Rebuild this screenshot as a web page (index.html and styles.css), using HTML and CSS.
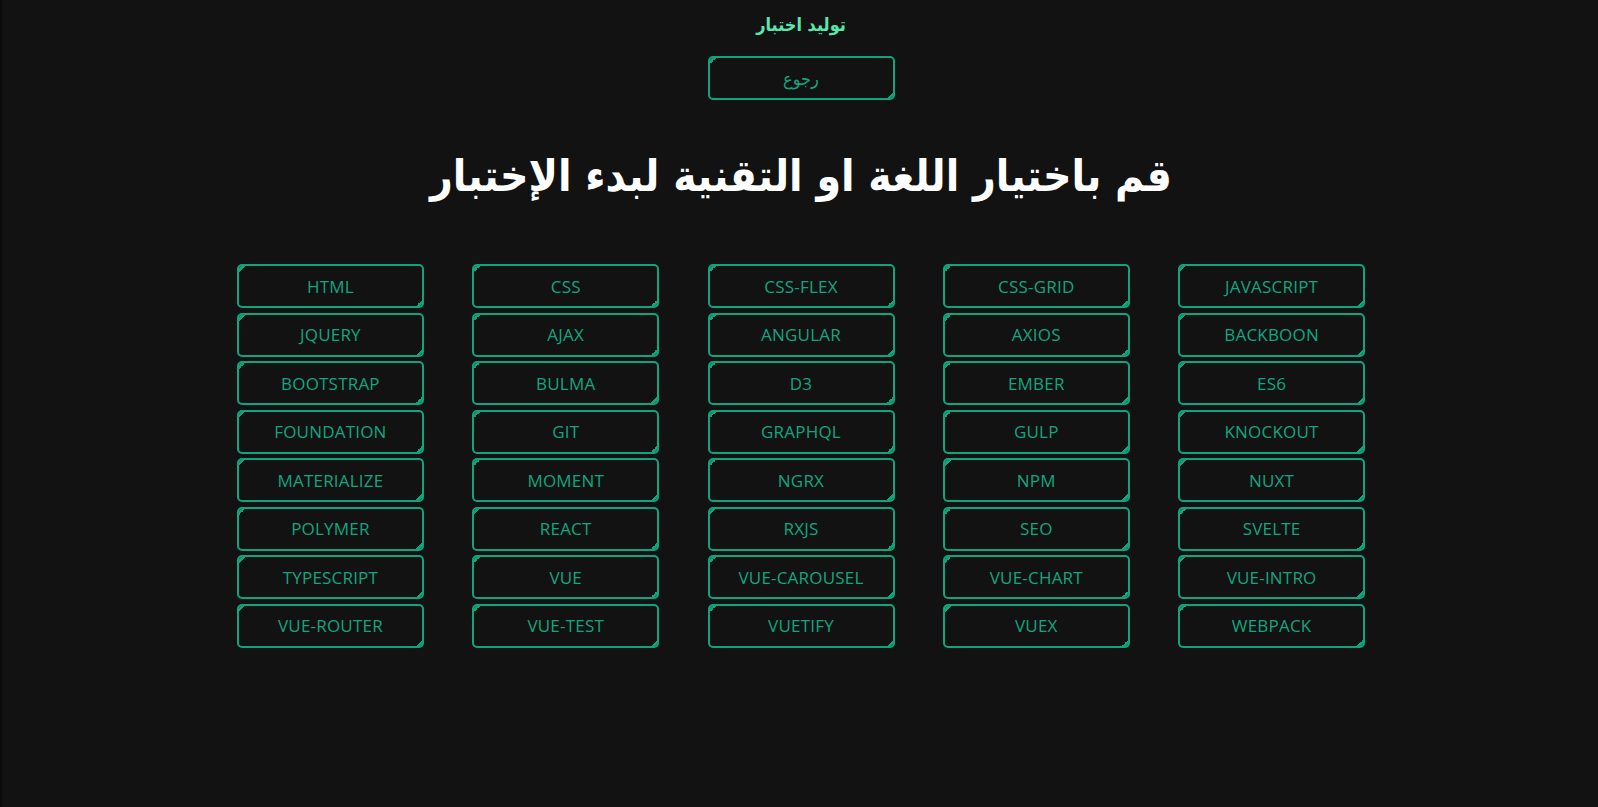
FILE: index.html
```html
<!DOCTYPE html>
<html lang="ar" dir="rtl">
<head>
<meta charset="utf-8">
<title>توليد اختبار</title>
<link rel="stylesheet" href="styles.css">
</head>
<body>
<div class="page">
  <header class="brand">توليد اختبار</header>
  <button class="btn back">رجوع</button>
  <h1 class="heading">قم باختيار اللغة او التقنية لبدء الإختبار</h1>
  <div class="grid" dir="ltr">
    <button class="btn">HTML</button>
    <button class="btn">CSS</button>
    <button class="btn">CSS-FLEX</button>
    <button class="btn">CSS-GRID</button>
    <button class="btn">JAVASCRIPT</button>
    <button class="btn">JQUERY</button>
    <button class="btn">AJAX</button>
    <button class="btn">ANGULAR</button>
    <button class="btn">AXIOS</button>
    <button class="btn">BACKBOON</button>
    <button class="btn">BOOTSTRAP</button>
    <button class="btn">BULMA</button>
    <button class="btn">D3</button>
    <button class="btn">EMBER</button>
    <button class="btn">ES6</button>
    <button class="btn">FOUNDATION</button>
    <button class="btn">GIT</button>
    <button class="btn">GRAPHQL</button>
    <button class="btn">GULP</button>
    <button class="btn">KNOCKOUT</button>
    <button class="btn">MATERIALIZE</button>
    <button class="btn">MOMENT</button>
    <button class="btn">NGRX</button>
    <button class="btn">NPM</button>
    <button class="btn">NUXT</button>
    <button class="btn">POLYMER</button>
    <button class="btn">REACT</button>
    <button class="btn">RXJS</button>
    <button class="btn">SEO</button>
    <button class="btn">SVELTE</button>
    <button class="btn">TYPESCRIPT</button>
    <button class="btn">VUE</button>
    <button class="btn">VUE-CAROUSEL</button>
    <button class="btn">VUE-CHART</button>
    <button class="btn">VUE-INTRO</button>
    <button class="btn">VUE-ROUTER</button>
    <button class="btn">VUE-TEST</button>
    <button class="btn">VUETIFY</button>
    <button class="btn">VUEX</button>
    <button class="btn">WEBPACK</button>
  </div>
</div>
</body>
</html>
```
FILE: styles.css
```css
html, body {
  margin: 0;
  padding: 0;
  height: 100%;
}
body {
  background: #121212;
  border-left: 2px solid #0b0b0b;
  box-sizing: border-box;
  font-family: "Open Sans", "DejaVu Sans", sans-serif;
  overflow: hidden;
}
.page {
  display: flex;
  flex-direction: column;
  align-items: center;
  padding-top: 13px;
  padding-left: 2px;
}
.brand {
  font-family: "DejaVu Sans Condensed", "DejaVu Sans", sans-serif;
  font-weight: bold;
  font-size: 18px;
  line-height: 24px;
  color: #5be6ad;
  height: 24px;
}
.btn {
  position: relative;
  box-sizing: border-box;
  width: 187px;
  height: 44px;
  background: transparent;
  border: 2px solid #0fa47c;
  border-radius: 5px;
  color: #12a57f;
  font-family: "Open Sans", "DejaVu Sans", sans-serif;
  font-size: 17px;
  font-weight: 400;
  padding: 0;
  margin: 0;
  display: flex;
  align-items: center;
  justify-content: center;
  letter-spacing: 0.2px;
}
.btn::before,
.btn::after {
  content: "";
  position: absolute;
  width: 6px;
  height: 6px;
}
.btn::before {
  top: 0;
  left: 0;
  background: linear-gradient(135deg, #0fa47c 50%, transparent 50%);
  border-top-left-radius: 3px;
}
.btn::after {
  bottom: 0;
  right: 0;
  background: linear-gradient(315deg, #0fa47c 50%, transparent 50%);
  border-bottom-right-radius: 3px;
}
.back {
  margin-top: 19px;
  font-family: "DejaVu Sans Condensed", "DejaVu Sans", sans-serif;
  font-size: 18px;
}
.heading {
  margin: 45px 0 0;
  font-family: "DejaVu Sans Condensed", "DejaVu Sans", sans-serif;
  font-weight: bold;
  font-size: 44px;
  line-height: 62px;
  color: #ffffff;
}
.grid {
  margin-top: 57px;
  display: grid;
  grid-template-columns: repeat(5, 187px);
  column-gap: 48.3px;
  row-gap: 4.5px;
}
```
